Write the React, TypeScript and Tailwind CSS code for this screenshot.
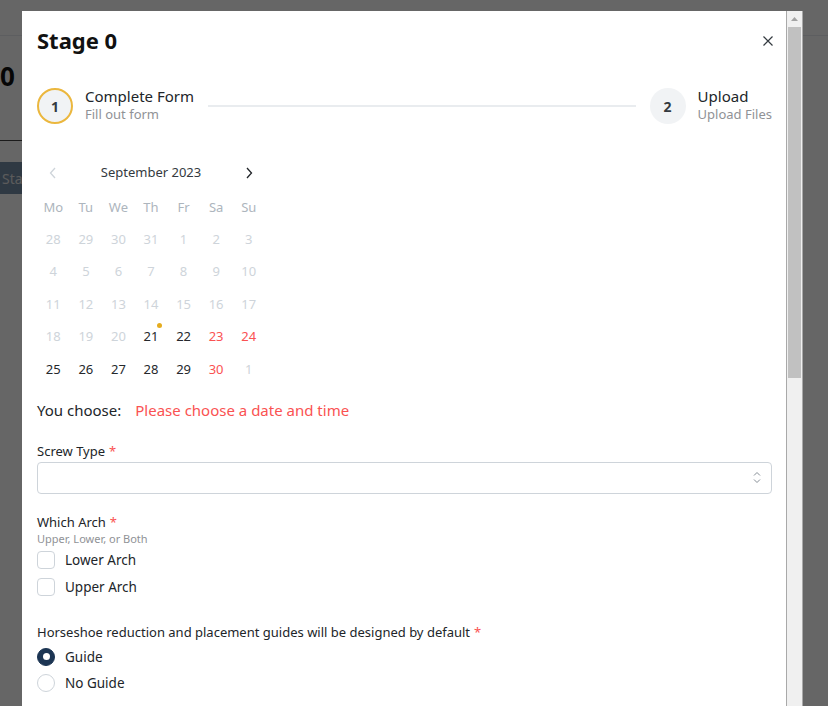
import { useState } from 'react';

const FONT = "font-['Noto_Sans',sans-serif]";

const WEEKDAYS = ['Mo', 'Tu', 'We', 'Th', 'Fr', 'Sa', 'Su'];

type Day = { d: number; tone: 'off' | 'on' | 'weekend'; dot?: boolean };

const WEEKS: Day[][] = [
  [28, 29, 30, 31, 1, 2, 3].map((d) => ({ d, tone: 'off' as const })),
  [4, 5, 6, 7, 8, 9, 10].map((d) => ({ d, tone: 'off' as const })),
  [11, 12, 13, 14, 15, 16, 17].map((d) => ({ d, tone: 'off' as const })),
  [
    { d: 18, tone: 'off' },
    { d: 19, tone: 'off' },
    { d: 20, tone: 'off' },
    { d: 21, tone: 'on', dot: true },
    { d: 22, tone: 'on' },
    { d: 23, tone: 'weekend' },
    { d: 24, tone: 'weekend' },
  ],
  [
    { d: 25, tone: 'on' },
    { d: 26, tone: 'on' },
    { d: 27, tone: 'on' },
    { d: 28, tone: 'on' },
    { d: 29, tone: 'on' },
    { d: 30, tone: 'weekend' },
    { d: 1, tone: 'off' },
  ],
];

const TONE: Record<Day['tone'], string> = {
  off: 'text-[#ced4da]',
  on: 'text-[#25282c]',
  weekend: 'text-[#fa5252]',
};

function Calendar() {
  return (
    <div className="w-[228px] text-[13px]">
      {/* month header */}
      <div className="flex h-[32px] items-center">
        <button className="flex h-[32px] w-[32.5px] items-center justify-center text-[#ced4da]">
          <svg width="8" height="12" viewBox="0 0 8 12" fill="none">
            <path d="M6 1L1.5 6L6 11" stroke="currentColor" strokeWidth="1.3" />
          </svg>
        </button>
        <div className="flex-1 text-center text-[13px] text-[#343a40]">September 2023</div>
        <button className="flex h-[32px] w-[32.5px] items-center justify-center text-[#212529]">
          <svg width="8" height="12" viewBox="0 0 8 12" fill="none">
            <path d="M2 1L6.5 6L2 11" stroke="currentColor" strokeWidth="1.3" />
          </svg>
        </button>
      </div>

      {/* weekdays */}
      <div className="mt-[3px] grid grid-cols-7">
        {WEEKDAYS.map((w) => (
          <div key={w} className="flex h-[31px] items-center justify-center text-[#adb5bd]">
            {w}
          </div>
        ))}
      </div>

      {WEEKS.map((week, i) => (
        <div key={i} className="grid grid-cols-7">
          {week.map((day, j) => (
            <div
              key={j}
              className={`relative flex h-[32.5px] items-center justify-center ${TONE[day.tone]}`}
            >
              {day.d}
              {day.dot && (
                <span className="absolute right-[5px] top-[2px] h-[5px] w-[5px] rounded-full bg-[#e5ac1f]" />
              )}
            </div>
          ))}
        </div>
      ))}
    </div>
  );
}

function Label({ text }: { text: string }) {
  return (
    <div className="text-[13px] leading-[18px] text-[#212529]">
      {text}
      <span className="ml-[4px] text-[#fa5252]">*</span>
    </div>
  );
}

function Checkbox({ label }: { label: string }) {
  const [on, setOn] = useState(false);
  return (
    <label className="flex h-[18px] cursor-pointer items-center gap-[10px]" onClick={() => setOn(!on)}>
      <span
        className={`h-[18px] w-[18px] rounded-[4px] border ${
          on ? 'border-[#1c3553] bg-[#1c3553]' : 'border-[#ced4da] bg-white'
        }`}
      />
      <span className="text-[13.5px] leading-[18px] text-[#212529]">{label}</span>
    </label>
  );
}

function Radio({ label, checked }: { label: string; checked?: boolean }) {
  return (
    <label className="flex h-[18px] cursor-pointer items-center gap-[10px]">
      <span
        className={`flex h-[18px] w-[18px] items-center justify-center rounded-full border ${
          checked ? 'border-[#1c3553] bg-[#1c3553]' : 'border-[#ced4da] bg-white'
        }`}
      >
        {checked && <span className="h-[7px] w-[7px] rounded-full bg-white" />}
      </span>
      <span className="text-[13.5px] leading-[18px] text-[#212529]">{label}</span>
    </label>
  );
}

function Step({ n, title, sub, active }: { n: number; title: string; sub: string; active?: boolean }) {
  return (
    <div className="flex items-center gap-[12px]">
      <div
        className={`flex h-[36px] w-[36px] items-center justify-center rounded-full bg-[#f1f3f5] text-[14px] font-bold text-[#343a40] ${
          active ? 'border-2 border-[#ebb73e]' : ''
        }`}
      >
        {n}
      </div>
      <div className="-mt-[2px] flex flex-col">
        <span className="text-[15px] leading-[18px] text-[#212529]">{title}</span>
        <span className="text-[13px] leading-[18px] text-[#909296]">{sub}</span>
      </div>
    </div>
  );
}

function Scrollbar() {
  return (
    <div className="flex w-[17px] shrink-0 flex-col border-x border-[#a9a9a9] bg-[#f0f0f0] px-[1px]">
      <div className="flex h-[16px] items-center justify-center">
        <svg width="7" height="4" viewBox="0 0 7 4">
          <path d="M0 4L3.5 0L7 4Z" fill="#a3a3a3" />
        </svg>
      </div>
      <div className="h-[351px] bg-[#c1c1c1]" />
    </div>
  );
}

export default function App() {
  return (
    <div className={`relative h-[706px] w-full overflow-hidden bg-white ${FONT}`}>
      {/* page underneath */}
      <div className="h-[36px] border-b border-[#e9ecef]" />
      <div className="mt-[24px] text-[26px] font-bold leading-[32px] text-[#111]">0</div>
      <div className="mt-[48px] h-[1px] w-[200px] bg-[#444]" />
      <div className="mt-[21px] flex h-[32px] w-[120px] items-center bg-[#778ea8] pl-[2px] text-[14px] text-[#e4e4e4]">
        Stage 0
      </div>

      {/* overlay */}
      <div className="absolute inset-0 bg-black/60">
        <div className="ml-[22px] mt-[11px] flex h-[720px] w-[781px] bg-white">
          <div className="flex-1 overflow-hidden pl-[15px] pr-[14px]">
            {/* title */}
            <div className="flex items-center justify-between pt-[14px]">
              <h2 className="text-[22px] font-bold leading-[30px] text-[#111]">Stage 0</h2>
              <button className="-mr-[6px] mt-[2px] flex h-[20px] w-[20px] items-center justify-center text-[#343a40]">
                <svg width="10" height="10" viewBox="0 0 10 10" fill="none">
                  <path d="M0.5 0.5L9.5 9.5M9.5 0.5L0.5 9.5" stroke="currentColor" strokeWidth="1.2" />
                </svg>
              </button>
            </div>

            {/* stepper */}
            <div className="mt-[33px] flex items-center">
              <Step n={1} title="Complete Form" sub="Fill out form" active />
              <div className="mx-[14px] h-[2px] flex-1 bg-[#e9ecef]" />
              <Step n={2} title="Upload" sub="Upload Files" />
            </div>

            {/* calendar */}
            <div className="mt-[33px]">
              <Calendar />
            </div>

            <div className="mt-[12px] flex items-center gap-[14px] text-[15px] leading-[24px]">
              <span className="text-[#212529]">You choose:</span>
              <span className="text-[#fa5252]">Please choose a date and time</span>
            </div>

            {/* screw type */}
            <div className="mt-[20px]">
              <Label text="Screw Type" />
              <div className="mt-[2px] flex h-[32px] items-center justify-end rounded-[4px] border border-[#ced4da] pr-[10px]">
                <svg width="8" height="13" viewBox="0 0 8 13" fill="none" className="text-[#868e96]">
                  <path d="M1 4.5L4 1.5L7 4.5M1 8.5L4 11.5L7 8.5" stroke="currentColor" strokeWidth="1" />
                </svg>
              </div>
            </div>

            {/* arch */}
            <div className="mt-[19px]">
              <Label text="Which Arch" />
              <div className="text-[11px] leading-[16px] text-[#909296]">Upper, Lower, or Both</div>
              <div className="mt-[4px] flex flex-col gap-[9px]">
                <Checkbox label="Lower Arch" />
                <Checkbox label="Upper Arch" />
              </div>
            </div>

            {/* guides */}
            <div className="mt-[27px]">
              <Label text="Horseshoe reduction and placement guides will be designed by default" />
              <div className="mt-[7px] flex flex-col gap-[8px]">
                <Radio label="Guide" checked />
                <Radio label="No Guide" />
              </div>
            </div>
          </div>
          <Scrollbar />
        </div>
      </div>
    </div>
  );
}
